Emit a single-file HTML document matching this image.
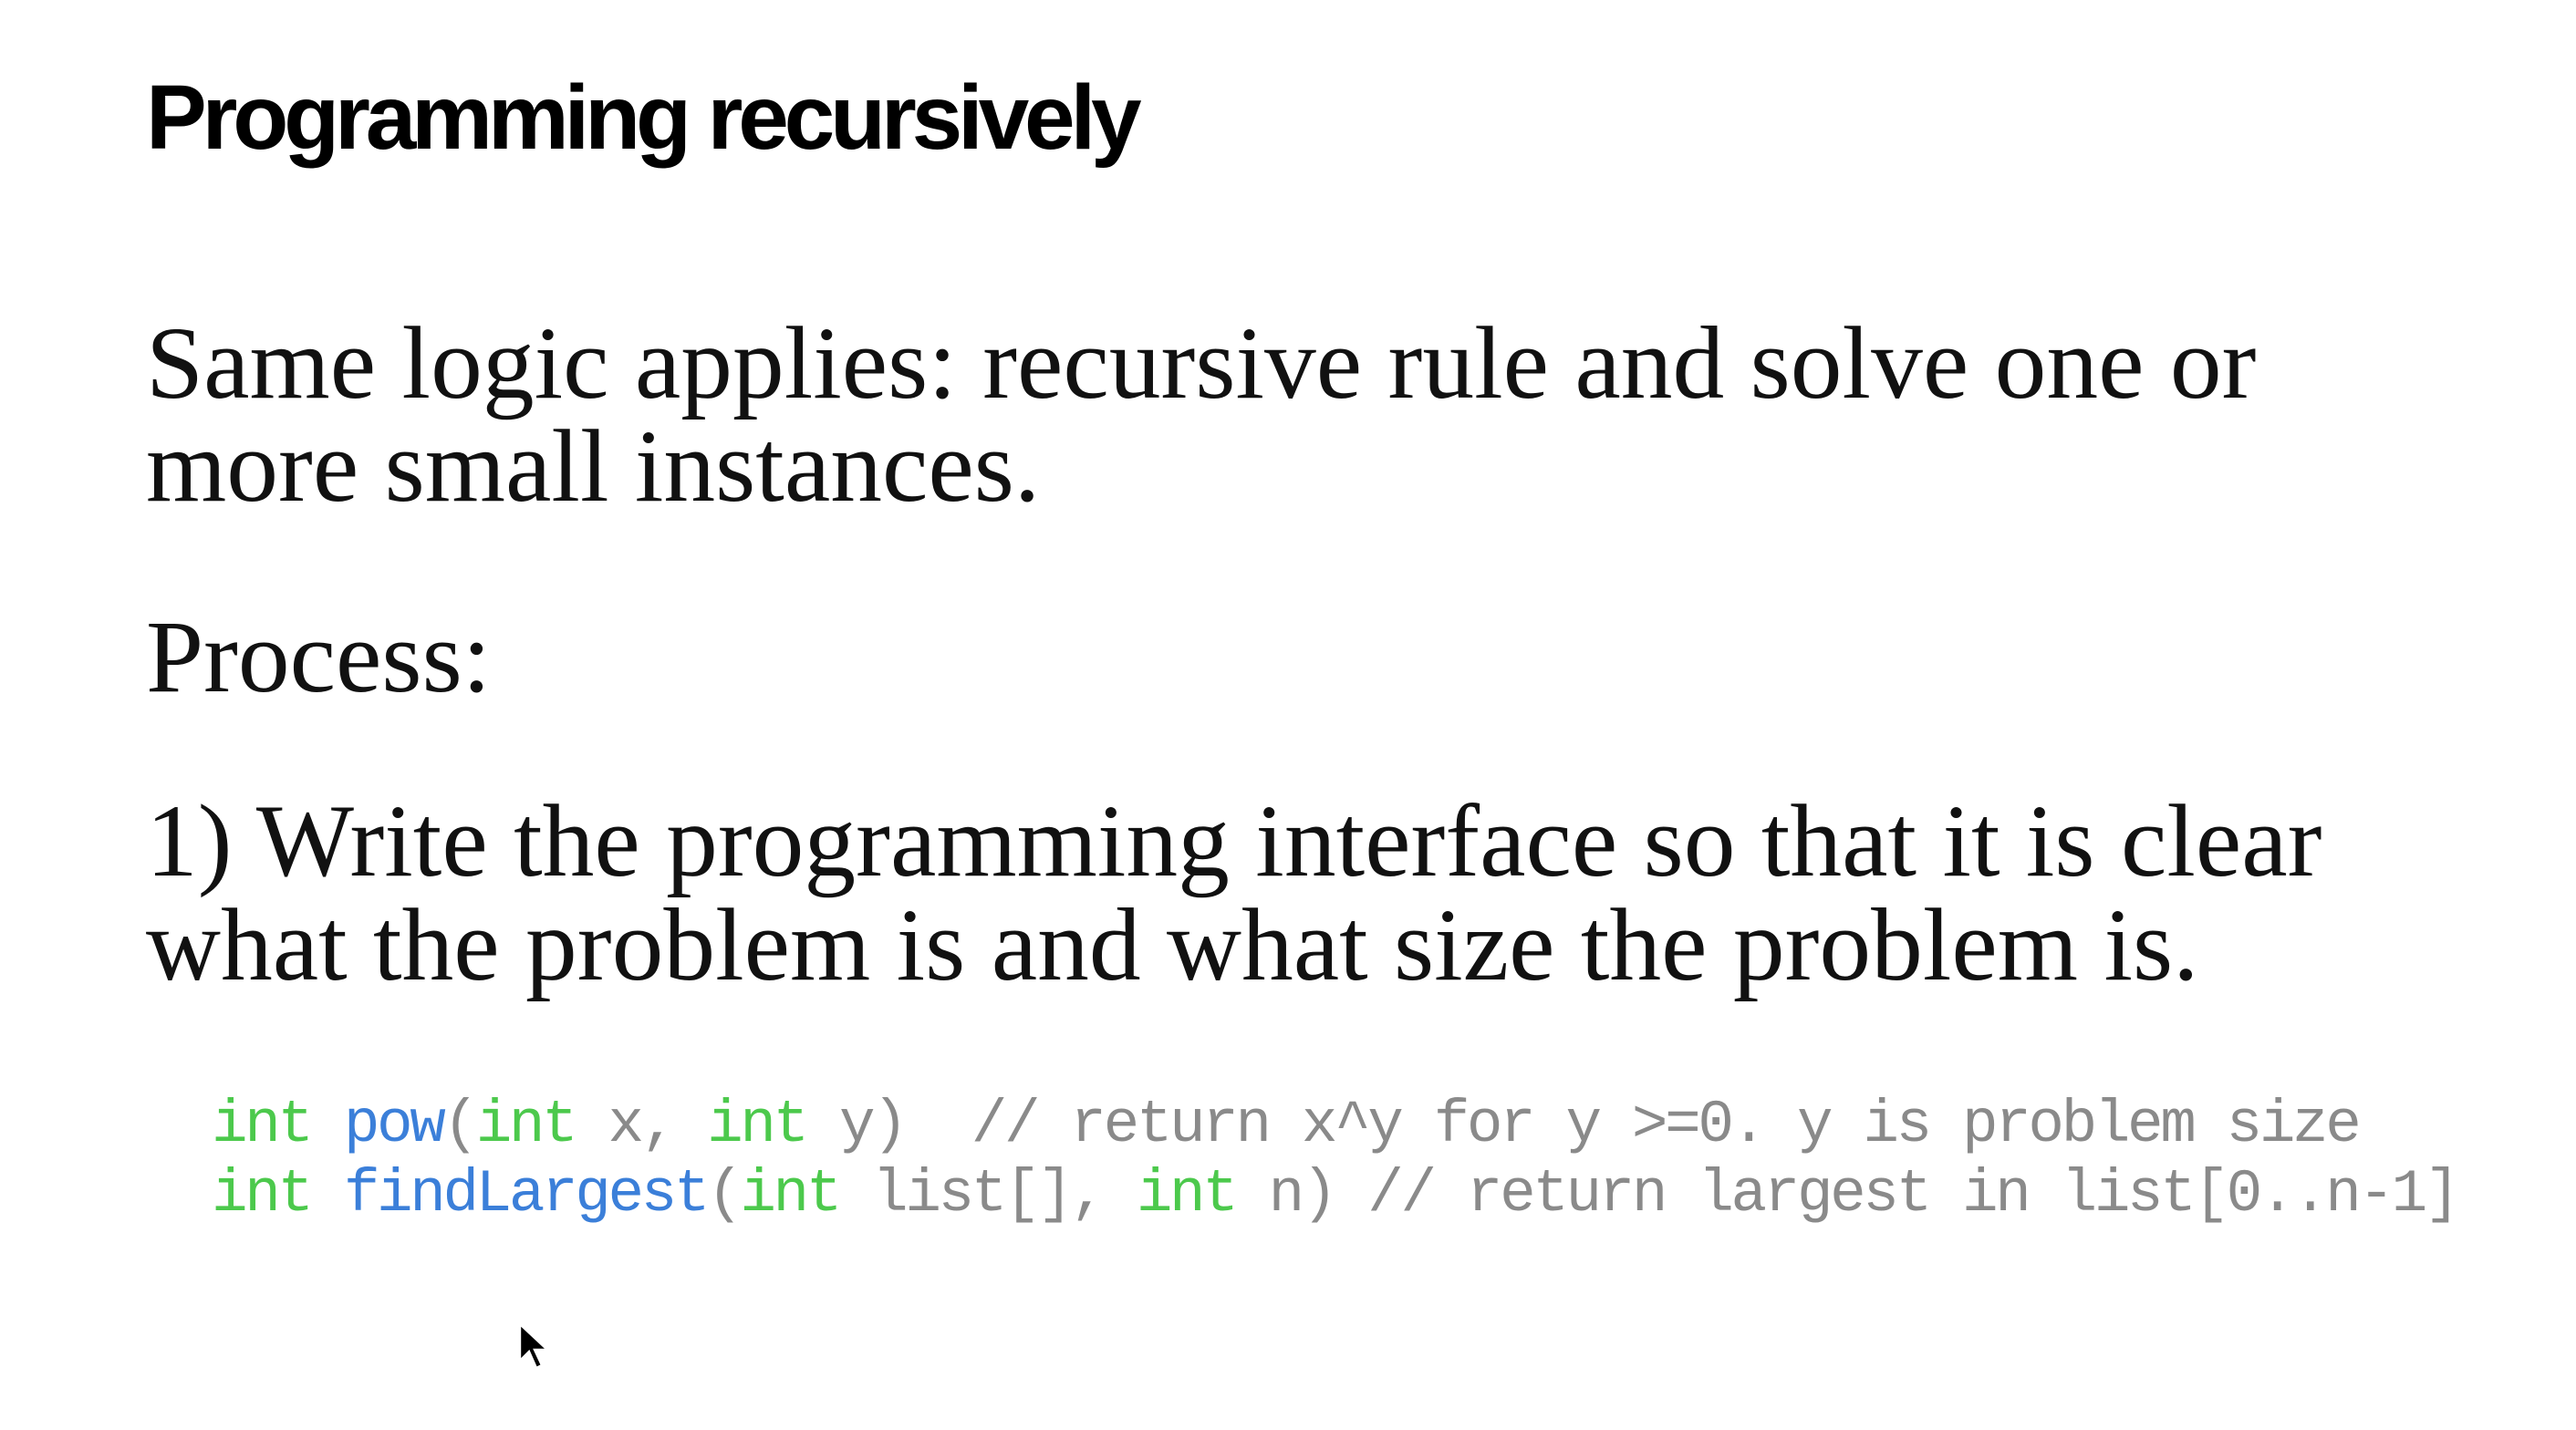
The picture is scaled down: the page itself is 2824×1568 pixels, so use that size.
<!DOCTYPE html>
<html><head><meta charset="utf-8"><style>
html,body{margin:0;padding:0;background:#fff;width:2824px;height:1568px;overflow:hidden;position:relative}
.t{position:absolute;left:160px;white-space:pre}
.h{font-family:"Liberation Sans",sans-serif;font-weight:bold;font-size:100px;line-height:100px;letter-spacing:-5.2px;color:#000}
.b{font-family:"Liberation Serif",serif;font-size:113.5px;line-height:113px;color:#111}
.c{font-family:"Liberation Mono",monospace;font-size:66px;line-height:76px;letter-spacing:-3.4px;color:#8a8a8a;left:232px}
.k{color:#4cc94c}.f{color:#3b7fd9}
</style></head><body>
<div class="t h" style="top:79px">Programming recursively</div>
<div class="t b" style="top:342px">Same logic applies: recursive rule and solve one or</div>
<div class="t b" style="top:455px">more small instances.</div>
<div class="t b" style="top:664px">Process:</div>
<div class="t b" style="top:866px">1) Write the programming interface so that it is clear</div>
<div class="t b" style="top:980px">what the problem is and what size the problem is.</div>
<div class="t c" style="top:1196px"><span class="k">int</span> <span class="f">pow</span>(<span class="k">int</span> x, <span class="k">int</span> y)  // return x^y for y &gt;=0. y is problem size</div>
<div class="t c" style="top:1272px"><span class="k">int</span> <span class="f">findLargest</span>(<span class="k">int</span> list[], <span class="k">int</span> n) // return largest in list[0..n-1]</div>
<svg style="position:absolute;left:566px;top:1448px" width="40" height="60" viewBox="0 0 20 30"><path d="M2 2 L2 22 L7 17 L11 26 L14 24.5 L10 16 L17 16 Z" fill="#000" stroke="#fff" stroke-width="1.2"/></svg>
</body></html>
